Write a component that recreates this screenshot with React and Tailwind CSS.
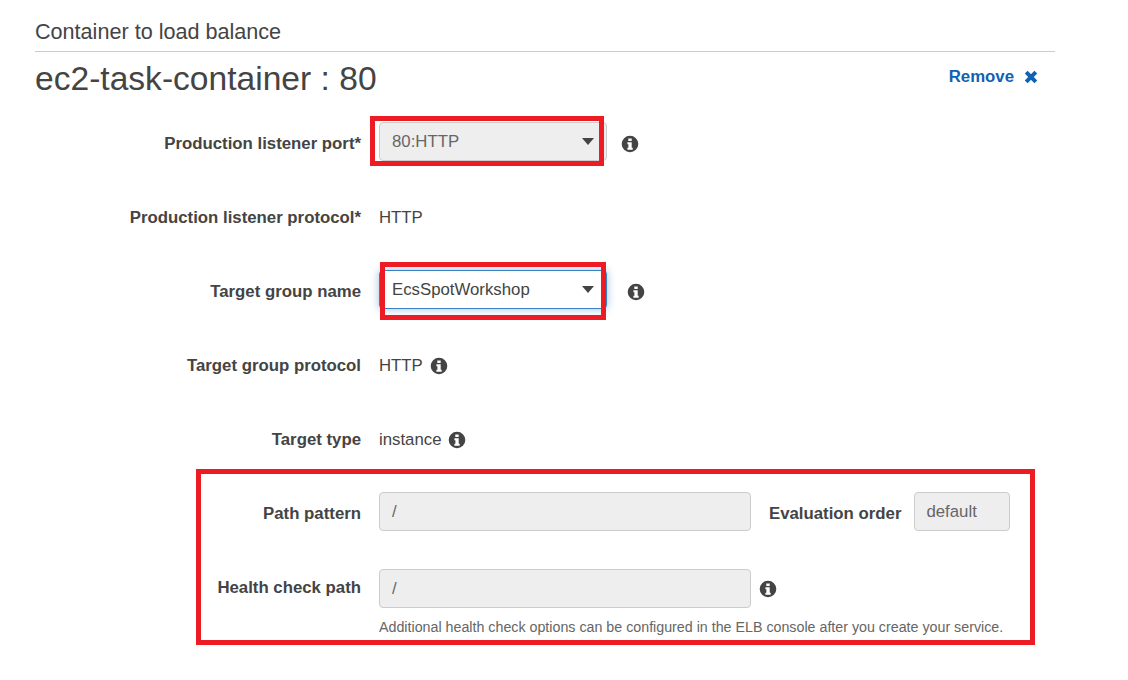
const fieldBase =
  "h-[39px] rounded-[4px] border border-[#ccc] bg-[#eee] px-3 text-[16.8px] text-[#666] outline-none";

function Info({ className = "" }) {
  return (
    <svg viewBox="0 0 18 18" className={`h-[18px] w-[18px] shrink-0 ${className}`}>
      <path
        fillRule="evenodd"
        fill="#444"
        d="M9 .7a8.3 8.3 0 1 0 0 16.6A8.3 8.3 0 0 0 9 .7ZM7.3 3.5h3.4v2.6H7.3ZM6.4 7.3h4.3v5.5h1v1.9H6.4v-1.9h1V9.2h-1Z"
      />
    </svg>
  );
}

function Row({ label, children, className = "mb-[35px]", labelClass = "pt-[5px]" }) {
  return (
    <div className={`flex h-[39px] items-center ${className}`}>
      <label className={`w-[326px] shrink-0 text-right text-[16.8px] font-bold text-[#444] ${labelClass}`}>{label}</label>
      <div className="ml-[18px] flex items-center">{children}</div>
    </div>
  );
}

function SelectBox({ value, focused }) {
  return (
    <div className="relative w-[228px]">
      <select
        defaultValue={value}
        disabled={!focused}
        className={
          focused
            ? "h-[39px] w-full appearance-none rounded-[4px] border border-[#3b82c4] bg-white px-3 text-[16.8px] text-[#444] shadow-[0_0_8px_rgba(59,130,196,0.5)] outline-none"
            : `w-full appearance-none ${fieldBase}`
        }
      >
        <option>{value}</option>
      </select>
      <span className="absolute right-[13px] top-[16px] h-0 w-0 border-x-[6.5px] border-t-[7px] border-x-transparent border-t-[#444]" />
    </div>
  );
}

export default function App() {
  return (
    <div className="h-[680px] w-[1128px] overflow-hidden bg-white pl-[35px] font-['Liberation_Sans',Arial,sans-serif] text-[#444]">
      <div className="w-[1020px]">
        <div className="border-b border-[#ccc] pb-[7px] pt-[20px] text-[21.6px] leading-[24px]">Container to load balance</div>
        <div className="mt-[8px] flex items-center justify-between pr-[17px]">
          <h2 className="text-[33.6px] leading-[38px]">ec2-task-container : 80</h2>
          <a className="flex items-center pb-[5px] text-[16.8px] font-bold text-[#0f62b4]">
            Remove
            <svg viewBox="0 0 14 14" className="ml-[10px] h-[14px] w-[14px]">
              <path d="M2.2 2.2 11.8 11.8M11.8 2.2 2.2 11.8" stroke="#0f62b4" strokeWidth="4" fill="none" />
            </svg>
          </a>
        </div>

        <div className="mt-[24px]">
          <Row label="Production listener port*">
            <div className="relative">
              <SelectBox value="80:HTTP" />
              <div className="pointer-events-none absolute -left-[9px] -top-[6px] h-[50px] w-[234px] border-[5px] border-[#ed1c24]" />
            </div>
            <Info className="ml-[14px] mt-[5px]" />
          </Row>

          <Row label="Production listener protocol*">
            <span className="pt-[5px] text-[16.8px]">HTTP</span>
          </Row>

          <Row label="Target group name">
            <div className="relative">
              <SelectBox value="EcsSpotWorkshop" focused />
              <div className="pointer-events-none absolute left-px -top-[8px] h-[58px] w-[226px] border-[5px] border-[#ed1c24]" />
            </div>
            <Info className="ml-[20px] mt-[5px]" />
          </Row>

          <Row label="Target group protocol">
            <span className="pt-[5px] text-[16.8px]">HTTP</span>
            <Info className="ml-[7px] mt-[5px]" />
          </Row>

          <Row label="Target type">
            <span className="pt-[5px] text-[16.8px]">instance</span>
            <Info className="ml-[6px] mt-[5px]" />
          </Row>

          <div className="relative">
            <Row label="Path pattern" className="mb-[38px]">
              <input disabled value="/" readOnly className={`w-[372px] ${fieldBase}`} />
              <span className="ml-[18px] pt-[5px] text-[16.8px] font-bold">Evaluation order</span>
              <input disabled value="default" readOnly className={`ml-[13px] w-[96px] !pl-[11px] ${fieldBase}`} />
            </Row>
            <Row label="Health check path" className="mb-[10px]" labelClass="pb-[1px]">
              <input disabled value="/" readOnly className={`w-[372px] ${fieldBase}`} />
              <Info className="ml-[8px]" />
            </Row>
            <p className="ml-[344px] text-[14.25px] leading-[19px] text-[#666]">
              Additional health check options can be configured in the ELB console after you create your service.
            </p>
            <div className="pointer-events-none absolute -top-[23px] left-[161px] h-[176px] w-[839px] border-[5px] border-[#ed1c24]" />
          </div>
        </div>
      </div>
    </div>
  );
}
